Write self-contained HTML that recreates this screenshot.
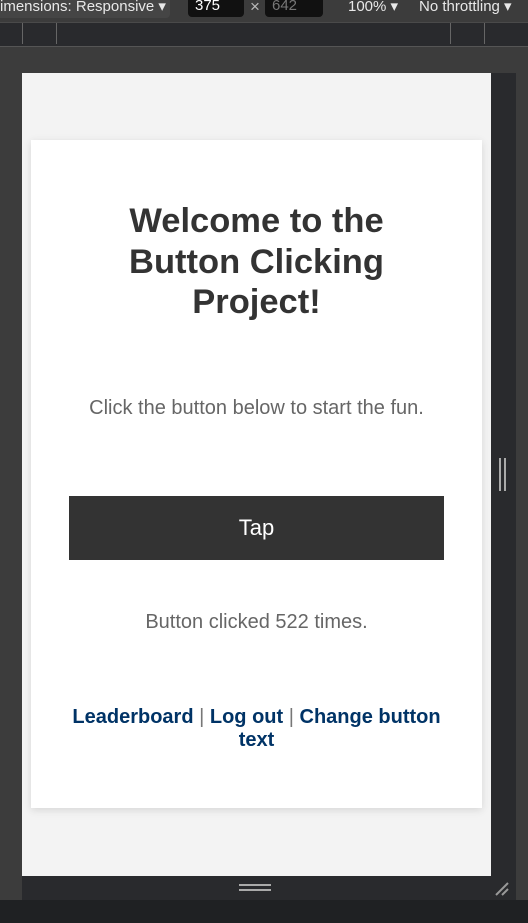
<!DOCTYPE html>
<html><head><style>
*{margin:0;padding:0;box-sizing:border-box}
body{width:528px;height:923px;background:#3c3c3c;position:relative;overflow:hidden;font-family:"Liberation Sans",Arial,sans-serif}
.abs{position:absolute}
.t{color:#e8e8e8;font-size:15px;top:-3px;white-space:nowrap}
.c{text-align:center;left:31px;width:451px}
</style></head><body>
<div class="abs" style="left:0;top:0;width:528px;height:22px;background:#3c3c3c"></div>
<div class="abs" style="left:0;top:0;width:170px;height:18px;background:#454545;border-radius:0 0 4px 0"></div>
<div class="abs t" style="left:0">imensions: Responsive ▾</div>
<div class="abs" style="left:188px;top:0;width:56px;height:17px;background:#111;border-radius:0 0 4px 4px"></div>
<div class="abs t" style="left:195px;color:#fff">375</div>
<div class="abs t" style="left:250px;color:#bbb;font-size:17px">×</div>
<div class="abs" style="left:265px;top:0;width:58px;height:17px;background:#111;border-radius:0 0 4px 4px"></div>
<div class="abs t" style="left:272px;color:#777">642</div>
<div class="abs t" style="left:348px">100% ▾</div>
<div class="abs t" style="left:419px">No throttling ▾</div>
<div class="abs" style="left:0;top:22px;width:528px;height:25px;background:#292a2d;border-top:1px solid #4a4a4a;border-bottom:1px solid #555"></div>
<div class="abs" style="left:22px;top:23px;width:1px;height:21px;background:#666"></div>
<div class="abs" style="left:56px;top:23px;width:1px;height:21px;background:#666"></div>
<div class="abs" style="left:450px;top:23px;width:1px;height:21px;background:#666"></div>
<div class="abs" style="left:484px;top:23px;width:1px;height:21px;background:#666"></div>
<div class="abs" style="left:22px;top:73px;width:469px;height:803px;background:#f3f3f3"></div>
<div class="abs" style="left:491px;top:73px;width:25px;height:827px;background:#292a2d"></div>
<div class="abs" style="left:22px;top:876px;width:494px;height:24px;background:#292a2d"></div>
<div class="abs" style="left:0;top:900px;width:528px;height:23px;background:#1f2123"></div>
<div class="abs" style="left:499px;top:458px;width:2px;height:33px;background:#aaa"></div>
<div class="abs" style="left:504px;top:458px;width:2px;height:33px;background:#aaa"></div>
<div class="abs" style="left:239px;top:884px;width:32px;height:2px;background:#aaa"></div>
<div class="abs" style="left:239px;top:889px;width:32px;height:2px;background:#aaa"></div>
<svg class="abs" style="left:494px;top:879px" width="20" height="18"><path d="M2 16 L14 4 M8 16 L14 10" stroke="#999" stroke-width="2"/></svg>
<div class="abs" style="left:31px;top:140px;width:451px;height:668px;background:#fff;box-shadow:0 2px 8px rgba(0,0,0,.12)"></div>
<div class="abs c" style="top:201px;font-size:34.5px;font-weight:bold;line-height:40.5px;color:#333;padding:0 70px">Welcome to the Button Clicking Project!</div>
<div class="abs c" style="top:397px;font-size:20px;color:#666">Click the button below to start the fun.</div>
<div class="abs" style="left:69px;top:496px;width:375px;height:64px;background:#333;color:#fff;font-size:22px;text-align:center;line-height:63px">Tap</div>
<div class="abs c" style="top:611px;font-size:20px;color:#666">Button clicked 522 times.</div>
<div class="abs c" style="top:706px;font-size:20px;font-weight:bold;line-height:23px;color:#036;padding:0 30px"><span>Leaderboard</span> <span style="color:#777;font-weight:normal">|</span> <span>Log out</span> <span style="color:#777;font-weight:normal">|</span> <span>Change button text</span></div>
</body></html>
